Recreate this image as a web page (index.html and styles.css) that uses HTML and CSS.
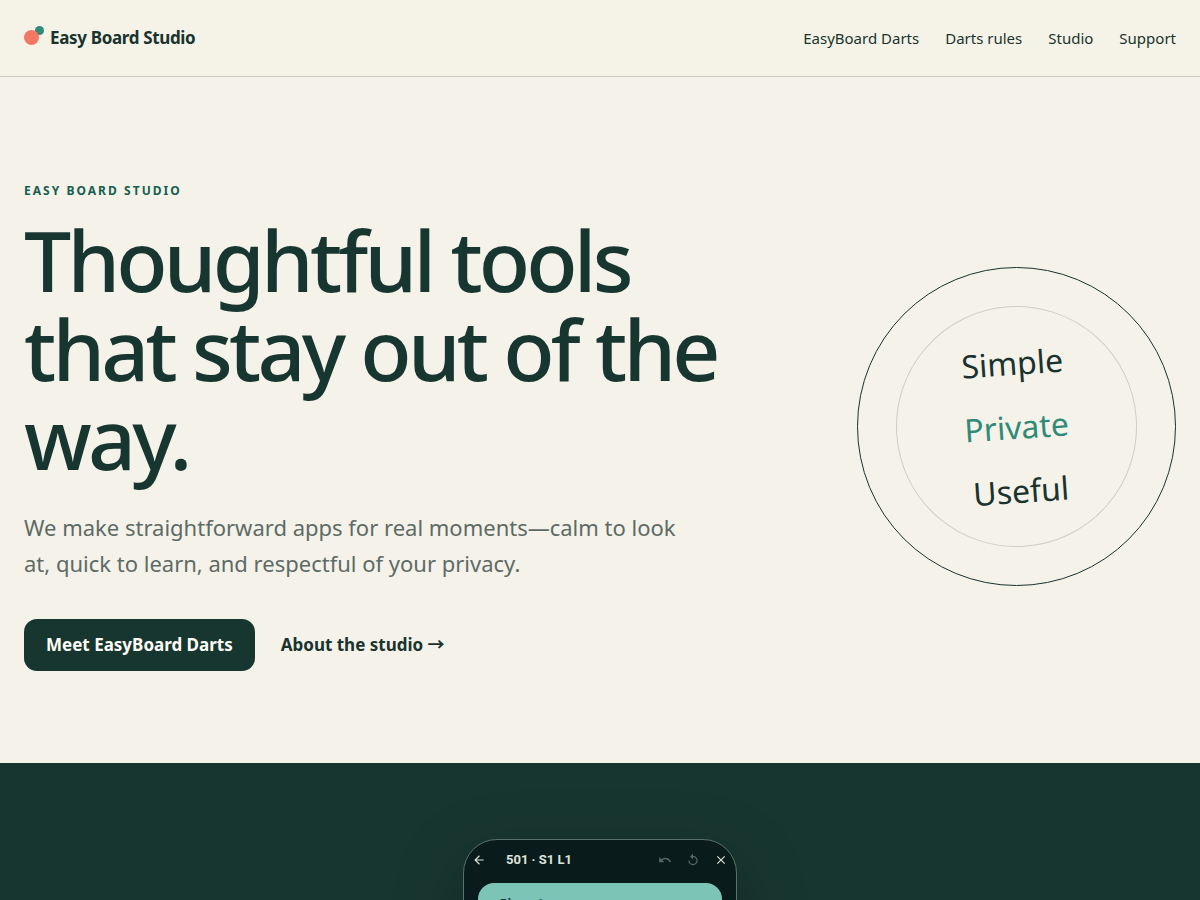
FILE: index.html
```html
<!DOCTYPE html>
<html lang="en">
<head>
  <meta charset="UTF-8">
  <meta name="viewport" content="width=device-width, initial-scale=1.0">
  <title>Easy Board Studio</title>
  <link rel="stylesheet" href="styles.css">
</head>
<body>
  <header class="site-header">
    <a class="brand" href="#">
      <svg class="brand-mark" viewBox="0 0 20 22" aria-hidden="true">
        <circle cx="15.5" cy="4.5" r="4.5" fill="#2f8a78"/>
        <circle cx="7.5" cy="11.5" r="7.5" fill="#f47764"/>
      </svg>
      <span>Easy Board Studio</span>
    </a>
    <nav class="site-nav">
      <a href="#darts">EasyBoard Darts</a>
      <a href="#rules">Darts rules</a>
      <a href="#studio">Studio</a>
      <a href="#support">Support</a>
    </nav>
  </header>

  <main>
    <section class="hero">
      <div class="hero-copy">
        <p class="eyebrow">Easy Board Studio</p>
        <h1>Thoughtful tools that stay out of the way.</h1>
        <p class="lead">We make straightforward apps for real moments—calm to look at, quick to learn, and respectful of your privacy.</p>
        <div class="actions">
          <a class="button" href="#darts">Meet EasyBoard Darts</a>
          <a class="text-link" href="#studio">About the studio <span class="arrow">→</span></a>
        </div>
      </div>
      <div class="orbit">
        <div class="orbit-words">
          <span>Simple</span>
          <span class="accent">Private</span>
          <span>Useful</span>
        </div>
      </div>
    </section>

    <section class="showcase" id="darts">
      <div class="phone">
        <div class="phone-bar">
          <svg class="icon" viewBox="0 0 24 24" aria-hidden="true"><path d="M20 11H7.83l5.59-5.59L12 4l-8 8 8 8 1.41-1.41L7.83 13H20z"/></svg>
          <span class="phone-title">501 · S1 L1</span>
          <svg class="icon dim" viewBox="0 0 24 24" aria-hidden="true"><path d="M12.5 8c-2.65 0-5.05.99-6.9 2.6L2 7v9h9l-3.62-3.62c1.39-1.16 3.16-1.88 5.12-1.88 3.54 0 6.55 2.31 7.6 5.5l2.37-.78C21.08 11.03 17.15 8 12.5 8z"/></svg>
          <svg class="icon dim" viewBox="0 0 24 24" aria-hidden="true"><path d="M12 5V1L7 6l5 5V7c3.31 0 6 2.69 6 6s-2.69 6-6 6-6-2.69-6-6H4c0 4.42 3.58 8 8 8s8-3.58 8-8-3.58-8-8-8z"/></svg>
          <svg class="icon" viewBox="0 0 24 24" aria-hidden="true"><path d="M19 6.41L17.59 5 12 10.59 6.41 5 5 6.41 10.59 12 5 17.59 6.41 19 12 13.41 17.59 19 19 17.59 13.41 12z"/></svg>
        </div>
        <div class="player-card">
          <p class="player-name">Player 1</p>
        </div>
      </div>
    </section>
  </main>
</body>
</html>
```

FILE: styles.css
```css
* {
  box-sizing: border-box;
}
body {
  margin: 0;
  font-family: "Noto Sans", sans-serif;
  background: #f5f2ea;
  color: #19332e;
}
a {
  color: inherit;
  text-decoration: none;
}
p, h1 {
  margin: 0;
}

.site-header {
  display: flex;
  align-items: center;
  justify-content: space-between;
  height: 77px;
  padding: 0 24px;
  background: #f5f3e7;
  border-bottom: 1px solid #cbcbc5;
}
.brand {
  display: flex;
  align-items: center;
  gap: 6px;
  padding-bottom: 2px;
  font-size: 17px;
  font-weight: 700;
  letter-spacing: -0.02em;
}
.brand-mark {
  width: 20px;
  height: 22px;
}
.site-nav {
  display: flex;
  gap: 26px;
  font-size: 15px;
}

.hero {
  display: grid;
  grid-template-columns: minmax(0, 1fr) 319px;
  gap: 72px;
  align-items: center;
  max-width: 1200px;
  margin: 0 auto;
  padding: 104px 24px 92px;
}
.eyebrow {
  margin-bottom: 14px;
  font-size: 12px;
  line-height: 20px;
  font-weight: 700;
  letter-spacing: 0.17em;
  text-transform: uppercase;
  color: #155e50;
}
h1 {
  max-width: 760px;
  margin-bottom: 27px;
  font-size: 84px;
  line-height: 89px;
  font-weight: 500;
  letter-spacing: -0.045em;
  color: #183630;
}
.lead {
  max-width: 660px;
  font-size: 22px;
  line-height: 36px;
  color: #5d6b66;
}
.actions {
  display: flex;
  align-items: center;
  gap: 26px;
  margin-top: 38px;
  font-size: 17px;
  line-height: 24px;
  font-weight: 700;
}
.button {
  padding: 14px 22px;
  border-radius: 13px;
  background: #183630;
  color: #fffef8;
}
.arrow {
  font-family: "Noto Sans CJK JP", sans-serif;
  line-height: 1;
}

.orbit {
  display: grid;
  place-items: center;
  width: 319px;
  height: 319px;
  border: 1px solid #19332e;
  border-radius: 50%;
}
.orbit-words {
  display: flex;
  flex-direction: column;
  align-items: center;
  justify-content: center;
  width: 241px;
  height: 241px;
  border: 1px solid #cfcdc6;
  border-radius: 50%;
  font-size: 32px;
  line-height: 64px;
  transform: rotate(-4deg);
}
.accent {
  color: #2f8a78;
}

.showcase {
  padding: 76px 24px;
  background: #183630;
}
.phone {
  width: 274px;
  height: 590px;
  margin: 0 auto;
  padding: 0 14px;
  border: 1px solid #5a706b;
  border-radius: 34px;
  background: #091b1a;
  box-shadow: 0 24px 70px rgba(0, 0, 0, 0.28);
}
.phone-bar {
  display: flex;
  align-items: center;
  gap: 14px;
  height: 39px;
  margin: 0 -6px 4px;
  color: #dfe3dc;
}
.phone-title {
  flex: 1;
  padding-left: 6px;
  font-family: Roboto, sans-serif;
  font-size: 13px;
  font-weight: 700;
}
.icon {
  width: 14px;
  height: 14px;
  fill: currentColor;
}
.icon.dim {
  color: #5a6765;
}
.player-card {
  height: 150px;
  padding: 14px 22px;
  border-radius: 16px;
  background: #7bc4b6;
  color: #12403a;
}
.player-name {
  font-family: Roboto, sans-serif;
  font-size: 12px;
  line-height: 14px;
  font-weight: 700;
}

@media (max-width: 900px) {
  .hero {
    grid-template-columns: 1fr;
  }
  h1 {
    font-size: 56px;
    line-height: 60px;
  }
}
```
